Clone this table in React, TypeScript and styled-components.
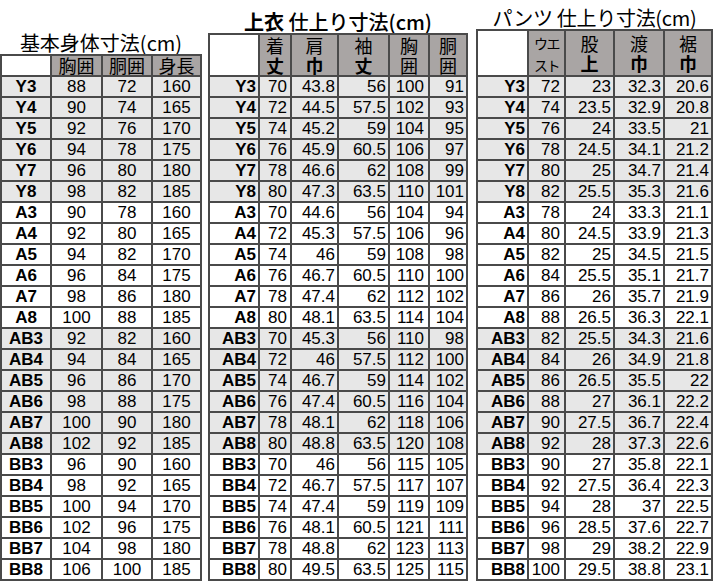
import React from "react";
import styled, { createGlobalStyle } from "styled-components";

const GlobalStyle = createGlobalStyle`
  body {
    margin: 0;
    background: #ffffff;
    font-family: "Liberation Sans", "Noto Sans CJK JP", sans-serif;
    color: #000;
  }
`;

type Row = (string | number)[];

const body: Row[] = [
  ["Y3", 88, 72, 160],
  ["Y4", 90, 74, 165],
  ["Y5", 92, 76, 170],
  ["Y6", 94, 78, 175],
  ["Y7", 96, 80, 180],
  ["Y8", 98, 82, 185],
  ["A3", 90, 78, 160],
  ["A4", 92, 80, 165],
  ["A5", 94, 82, 170],
  ["A6", 96, 84, 175],
  ["A7", 98, 86, 180],
  ["A8", 100, 88, 185],
  ["AB3", 92, 82, 160],
  ["AB4", 94, 84, 165],
  ["AB5", 96, 86, 170],
  ["AB6", 98, 88, 175],
  ["AB7", 100, 90, 180],
  ["AB8", 102, 92, 185],
  ["BB3", 96, 90, 160],
  ["BB4", 98, 92, 165],
  ["BB5", 100, 94, 170],
  ["BB6", 102, 96, 175],
  ["BB7", 104, 98, 180],
  ["BB8", 106, 100, 185],
];

const jacket: Row[] = [
  ["Y3", 70, 43.8, 56, 100, 91],
  ["Y4", 72, 44.5, 57.5, 102, 93],
  ["Y5", 74, 45.2, 59, 104, 95],
  ["Y6", 76, 45.9, 60.5, 106, 97],
  ["Y7", 78, 46.6, 62, 108, 99],
  ["Y8", 80, 47.3, 63.5, 110, 101],
  ["A3", 70, 44.6, 56, 104, 94],
  ["A4", 72, 45.3, 57.5, 106, 96],
  ["A5", 74, 46, 59, 108, 98],
  ["A6", 76, 46.7, 60.5, 110, 100],
  ["A7", 78, 47.4, 62, 112, 102],
  ["A8", 80, 48.1, 63.5, 114, 104],
  ["AB3", 70, 45.3, 56, 110, 98],
  ["AB4", 72, 46, 57.5, 112, 100],
  ["AB5", 74, 46.7, 59, 114, 102],
  ["AB6", 76, 47.4, 60.5, 116, 104],
  ["AB7", 78, 48.1, 62, 118, 106],
  ["AB8", 80, 48.8, 63.5, 120, 108],
  ["BB3", 70, 46, 56, 115, 105],
  ["BB4", 72, 46.7, 57.5, 117, 107],
  ["BB5", 74, 47.4, 59, 119, 109],
  ["BB6", 76, 48.1, 60.5, 121, 111],
  ["BB7", 78, 48.8, 62, 123, 113],
  ["BB8", 80, 49.5, 63.5, 125, 115],
];

const pants: Row[] = [
  ["Y3", 72, 23, 32.3, 20.6],
  ["Y4", 74, 23.5, 32.9, 20.8],
  ["Y5", 76, 24, 33.5, 21],
  ["Y6", 78, 24.5, 34.1, 21.2],
  ["Y7", 80, 25, 34.7, 21.4],
  ["Y8", 82, 25.5, 35.3, 21.6],
  ["A3", 78, 24, 33.3, 21.1],
  ["A4", 80, 24.5, 33.9, 21.3],
  ["A5", 82, 25, 34.5, 21.5],
  ["A6", 84, 25.5, 35.1, 21.7],
  ["A7", 86, 26, 35.7, 21.9],
  ["A8", 88, 26.5, 36.3, 22.1],
  ["AB3", 82, 25.5, 34.3, 21.6],
  ["AB4", 84, 26, 34.9, 21.8],
  ["AB5", 86, 26.5, 35.5, 22],
  ["AB6", 88, 27, 36.1, 22.2],
  ["AB7", 90, 27.5, 36.7, 22.4],
  ["AB8", 92, 28, 37.3, 22.6],
  ["BB3", 90, 27, 35.8, 22.1],
  ["BB4", 92, 27.5, 36.4, 22.3],
  ["BB5", 94, 28, 37, 22.5],
  ["BB6", 96, 28.5, 37.6, 22.7],
  ["BB7", 98, 29, 38.2, 22.9],
  ["BB8", 100, 29.5, 38.8, 23.1],
];

// Y and AB groups are shaded grey
const shaded = (label: string) => label.startsWith("Y") || label.startsWith("AB");

const Page = styled.div`
  width: 720px;
  height: 583px;
  display: flex;
  align-items: flex-end;
  padding-bottom: 2px;
  box-sizing: border-box;
`;

const Block = styled.div<{ $gap: number }>`
  display: flex;
  flex-direction: column;
  align-items: center;
  margin-left: ${(p) => p.$gap}px;
`;

const Title = styled.div<{ $weight?: number; $spacing?: number }>`
  font-family: "Noto Sans CJK JP", sans-serif;
  font-size: 20px;
  line-height: 24px;
  font-weight: ${(p) => p.$weight ?? 400};
  white-space: nowrap;
  margin-bottom: -1px;
  letter-spacing: ${(p) => p.$spacing ?? 0}px;

  b {
    font-weight: 700;
  }
`;

const Table = styled.table`
  border-collapse: collapse;
  table-layout: fixed;
  border: 2px solid #3c3c3c;
`;

const HeadCell = styled.th<{ $blank?: boolean; $tall?: boolean }>`
  background: ${(p) => (p.$blank ? "#ffffff" : "#a9a5a4")};
  border: 2px solid #4a4a4a;
  height: ${(p) => (p.$tall ? 40 : 19)}px;
  padding: 0;
  font-family: "Noto Sans CJK JP", sans-serif;
  font-weight: 400;
  font-size: 18px;
  line-height: ${(p) => (p.$tall ? 20 : 19)}px;
  text-align: center;
  vertical-align: middle;
  white-space: nowrap;

  b {
    font-weight: 700;
  }
`;

const Cell = styled.td<{ $shade: boolean; $align: "center" | "right"; $label?: boolean; $pad?: number }>`
  background: ${(p) => (p.$shade ? "#e7e7e7" : "#ffffff")};
  border: 2px solid #4a4a4a;
  height: 19px;
  padding: 0 ${(p) => p.$pad ?? 2}px 0 0;
  font-size: 17px;
  font-weight: ${(p) => (p.$label ? 700 : 400)};
  line-height: 19px;
  text-align: ${(p) => p.$align};
  white-space: nowrap;
  overflow: hidden;
`;

type Col = { w: number; pad?: number };

const SizeTable = ({
  cols,
  head,
  rows,
  align,
  tall,
}: {
  cols: Col[];
  head: React.ReactNode[];
  rows: Row[];
  align: "center" | "right";
  tall?: boolean;
}) => (
  <Table style={{ width: cols.reduce((s, c) => s + c.w, 0) }}>
    <colgroup>
      {cols.map((c, i) => (
        <col key={i} style={{ width: c.w }} />
      ))}
    </colgroup>
    <thead>
      <tr>
        <HeadCell $blank $tall={tall} />
        {head.map((h, i) => (
          <HeadCell key={i} $tall={tall}>
            {h}
          </HeadCell>
        ))}
      </tr>
    </thead>
    <tbody>
      {rows.map((r) => {
        const label = String(r[0]);
        return (
          <tr key={label}>
            {r.map((v, i) => (
              <Cell
                key={i}
                $shade={shaded(label)}
                $label={i === 0}
                $align={align}
                $pad={align === "center" ? 0 : cols[i].pad}
              >
                {v}
              </Cell>
            ))}
          </tr>
        );
      })}
    </tbody>
  </Table>
);

const Two = ({ top, bottom, bold }: { top: string; bottom: string; bold?: boolean }) => (
  <>
    {top}
    <br />
    {bold ? <b>{bottom}</b> : bottom}
  </>
);

const SmallHead = styled.span`
  font-size: 14px;
  line-height: 20px;
  letter-spacing: -1.5px;
`;

export default function App() {
  return (
    <>
      <GlobalStyle />
      <Page>
        <Block $gap={0}>
          <Title>基本身体寸法(cm)</Title>
          <SizeTable
            cols={[{ w: 50 }, { w: 51 }, { w: 50 }, { w: 49 }]}
            head={["胸囲", "胴囲", "身長"]}
            rows={body}
            align="center"
          />
        </Block>
        <Block $gap={6}>
          <Title $weight={500}>
            <b>上衣</b> 仕上り寸法(cm)
          </Title>
          <SizeTable
            tall
            cols={[{ w: 50, pad: 2 }, { w: 32, pad: 3 }, { w: 47, pad: 2 }, { w: 51, pad: 2 }, { w: 40, pad: 4 }, { w: 38, pad: 2 }]}
            head={[
              <Two top="着" bottom="丈" bold />,
              <Two top="肩" bottom="巾" bold />,
              <Two top="袖" bottom="丈" bold />,
              <Two top="胸" bottom="囲" />,
              <Two top="胴" bottom="囲" />,
            ]}
            rows={jacket}
            align="right"
          />
        </Block>
        <Block $gap={8}>
          <Title $spacing={-0.3}>パンツ 仕上り寸法(cm)</Title>
          <SizeTable
            tall
            cols={[{ w: 51, pad: 2 }, { w: 37, pad: 4 }, { w: 49, pad: 2 }, { w: 50, pad: 2 }, { w: 48, pad: 2 }]}
            head={[
              <SmallHead>
                ウエ
                <br />
                スト
              </SmallHead>,
              <Two top="股" bottom="上" bold />,
              <Two top="渡" bottom="巾" bold />,
              <Two top="裾" bottom="巾" bold />,
            ]}
            rows={pants}
            align="right"
          />
        </Block>
      </Page>
    </>
  );
}
